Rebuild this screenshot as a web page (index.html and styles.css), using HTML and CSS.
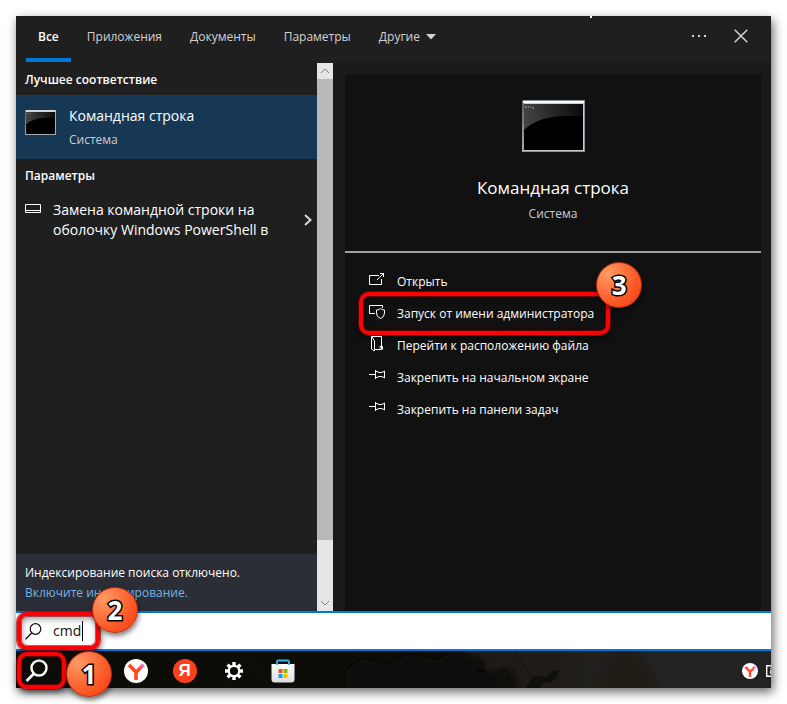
FILE: index.html
```html
<!DOCTYPE html>
<html lang="ru">
<head>
<meta charset="utf-8">
<meta name="viewport" content="width=device-width, initial-scale=1">
<title>Поиск</title>
<link rel="stylesheet" href="styles.css">
</head>
<body>
<svg class="defs" aria-hidden="true">
  <defs>
    <linearGradient id="sheen" x1="0" y1="0" x2="1" y2="0"><stop offset="0" stop-color="#444"/><stop offset="1" stop-color="#0a0a0a"/></linearGradient>
    <linearGradient id="frame" x1="0" y1="0" x2="0" y2="1"><stop offset="0" stop-color="#596067"/><stop offset="1" stop-color="#a3abb4"/></linearGradient>
    <linearGradient id="arm" x1="0" y1="1" x2="1" y2="0"><stop offset="0.4" stop-color="#fc4a22"/><stop offset="0.9" stop-color="#f56bd0"/></linearGradient>
    <linearGradient id="bag" x1="0" y1="0" x2="0" y2="1"><stop offset="0" stop-color="#fff"/><stop offset="1" stop-color="#dcdcdc"/></linearGradient>
    <linearGradient id="sand" x1="0" y1="0" x2="1" y2="0"><stop offset="0" stop-color="#1d1914"/><stop offset="0.3" stop-color="#201c18"/><stop offset="0.5" stop-color="#222"/></linearGradient>
    <filter id="soften"><feGaussianBlur stdDeviation="2"/></filter>
    <symbol id="console" viewBox="0 0 63 52">
      <rect width="63" height="52" fill="#8a939b"/>
      <rect x="1" y="1" width="61" height="50" fill="#c9cdd2"/>
      <rect width="2" height="52" fill="url(#frame)"/>
      <rect x="1" y="1" width="61" height="2" fill="#fff"/>
      <rect x="2" y="4" width="59" height="46" fill="#000"/>
      <path d="M2 4H61V16H44Q17 16 2 30Z" fill="url(#sheen)"/>
      <path d="M3 7h2M6 7h1M8 7h1M10 8h2" stroke="#aaa"/>
    </symbol>
    <symbol id="browser" viewBox="0 0 24 24">
      <circle cx="12" cy="12" r="12" fill="#fff"/>
      <path d="M5 6L12 13V21" fill="none" stroke="#fc4a22" stroke-width="3.6" stroke-linejoin="round"/>
      <path d="M12 13.5L19.5 5.5" stroke="url(#arm)" stroke-width="3.6"/>
    </symbol>
    <symbol id="pin" viewBox="0 0 17 14">
      <path d="M0 5.500H6M6.500 1V10M6.500 2.500H8L10 3.500H13L15.500 2V9L13 7.500H10L8 8.500H6.500" fill="none" stroke="#fff"/>
    </symbol>
  </defs>
</svg>

<main class="window">
  <header class="tabs">
    <nav class="tab-list">
      <button class="tab active">Все</button>
      <button class="tab">Приложения</button>
      <button class="tab">Документы</button>
      <button class="tab">Параметры</button>
      <button class="tab">Другие<svg width="10" height="6" viewBox="0 0 10 6"><path d="M0 0H10L5 5.500Z" fill="#d2d2d2"/></svg></button>
    </nav>
    <button class="tool" aria-label="Ещё"><svg width="16" height="16" viewBox="0 0 16 16"><path d="M1 7h2v2h-2zM7 7h2v2h-2zM13 7h2v2h-2z" fill="#d2d2d2"/></svg></button>
    <button class="tool" aria-label="Закрыть"><svg width="14" height="14" viewBox="0 0 14 14"><path d="M.7.7L13.300 13.300M13.300.7L.7 13.300" stroke="#d2d2d2" stroke-width="1.500"/></svg></button>
    <span class="speck"></span>
  </header>

  <div class="content">
    <section class="results">
      <h2 class="group">Лучшее соответствие</h2>
      <button class="best">
        <svg class="best-icon" width="31" height="25" viewBox="0 0 63 52" preserveAspectRatio="none"><use href="#console"/></svg>
        <span class="best-text"><span class="best-name">Командная строка</span><span class="muted">Система</span></span>
      </button>
      <h2 class="group">Параметры</h2>
      <button class="setting">
        <svg class="setting-icon" width="16" height="9" viewBox="0 0 16 9"><path d="M.5.5H15.500V8.500H.5ZM.5 6.500H15.500" fill="none" stroke="#fff"/></svg>
        <span class="setting-name">Замена командной строки на оболочку Windows PowerShell в</span>
        <svg width="8" height="12" viewBox="0 0 8 12"><path d="M1 1L6.500 6L1 11" fill="none" stroke="#d8d8d8" stroke-width="2"/></svg>
      </button>
      <div class="notice">
        <p>Индексирование поиска отключено.</p>
        <a href="#index">Включите индексирование.</a>
      </div>
    </section>

    <div class="scrollbar" aria-hidden="true">
      <svg width="16" height="16" viewBox="0 0 16 16"><path d="M4 10L8 6L12 10" fill="none" stroke="#808080"/></svg>
      <div class="thumb"></div>
      <div class="track"></div>
      <svg width="16" height="16" viewBox="0 0 16 16"><path d="M4 6L8 10L12 6" fill="none" stroke="#808080"/></svg>
    </div>

    <section class="preview">
      <div class="card">
        <div class="hero">
          <svg width="63" height="52"><use href="#console"/></svg>
          <h1>Командная строка</h1>
          <p class="muted">Система</p>
        </div>
        <div class="actions">
          <button class="action"><svg width="17" height="14" viewBox="0 0 17 14"><path d="M10 2.500H.5V11.500H12.500V6M8 7L14.500 .5M11 .5H14.500V4" fill="none" stroke="#fff"/></svg>Открыть</button>
          <button class="action marked"><svg width="17" height="16" viewBox="0 0 17 16"><path d="M6 9.500H.5V1.500H13.500V4M11.500 4.500Q13 6 15.500 6V9Q15.500 13 11.500 14.500Q7.500 13 7.500 9V6Q10 6 11.500 4.500Z" fill="none" stroke="#fff"/></svg>Запуск от имени администратора<span class="badge badge-three">3</span></button>
          <button class="action"><svg width="17" height="16" viewBox="0 0 17 16"><path d="M2.500 .5H12.500V13.500H6M2.500 .5V13L5.500 15V5L3 1M11 12.500V10.500H13.500V13.500" fill="none" stroke="#fff"/></svg>Перейти к расположению файла</button>
          <button class="action"><svg width="17" height="14"><use href="#pin"/></svg>Закрепить на начальном экране</button>
          <button class="action"><svg width="17" height="14"><use href="#pin"/></svg>Закрепить на панели задач</button>
        </div>
      </div>
    </section>
  </div>

  <div class="search">
    <label class="search-mark" for="query"><svg width="17" height="17" viewBox="0 0 17 17"><circle cx="10.500" cy="6" r="5.300" fill="none" stroke="#111" stroke-width="1.200"/><path d="M6.800 9.800L.5 16.200" stroke="#111" stroke-width="1.300"/></svg></label>
    <div class="field"><input id="query" type="text" value="cmd" aria-label="Поиск"><span class="caret"></span></div>
    <span class="outline"></span>
    <span class="badge badge-two">2</span>
  </div>

  <footer class="taskbar">
    <svg class="wallpaper" viewBox="0 0 755 37" preserveAspectRatio="none" aria-hidden="true">
      <rect width="755" height="37" fill="#0c0d08"/>
      <path d="M445 0H755V37H485Q475 20 445 0Z" fill="url(#sand)"/>
      <g filter="url(#soften)">
        <path d="M595 0H620L645 40H580Q590 15 595 0Z" fill="#211d18"/>
        <path d="M330 20L345 8L372 14L395 3L420 10L440 0L470 11L455 22L495 18L503 37H330Z" fill="#0e0f08"/>
      </g>
      <path d="M510 37L516 27L522 24L530 26L536 20L543 19L541 27L534 32L528 31L524 37ZM455 4L464 8L470 15L462 18L455 14ZM481 20L490 18L494 24L488 28L499 33V37H478Z" fill="#0f100a"/>
      <path d="M498 0L518 30" fill="none" stroke="#13140d"/>
      <path d="M10 32L45 8M20 5L48 26M90 34L125 6M210 37L230 8L250 30M340 0L356 25" fill="none" stroke="#14160f"/>
    </svg>
    <button class="task start" aria-label="Поиск"><svg width="24" height="24" viewBox="0 0 24 24"><circle cx="14" cy="9" r="7.500" fill="none" stroke="#fff" stroke-width="2.400"/><path d="M9 14.500L1.500 22" stroke="#fff" stroke-width="2.600"/></svg><span class="outline"></span><span class="badge badge-one">1</span></button>
    <div class="apps">
      <button class="task" aria-label="Браузер"><svg width="24" height="24"><use href="#browser"/></svg></button>
      <button class="task" aria-label="Яндекс"><span class="ya">Я</span></button>
      <button class="task" aria-label="Настройки"><svg width="20" height="20" viewBox="0 0 20 20"><g stroke="#fff" stroke-width="3.400"><path d="M10 1V5M10 15V19M1 10H5M15 10H19M3.600 3.600L6.500 6.500M13.500 13.500L16.400 16.400M16.400 3.600L13.500 6.500M6.500 13.500L3.600 16.400"/></g><circle cx="10" cy="10" r="5.200" fill="#0b0c08" stroke="#fff" stroke-width="2.200"/></svg></button>
      <button class="task" aria-label="Магазин"><svg width="24" height="24" viewBox="0 0 24 24"><path d="M.5 5H23.500V20.500Q23.500 23.500 20.500 23.500H3.500Q.5 23.500 .5 20.500Z" fill="url(#bag)"/><path d="M6 6V2.500Q6 1.500 7 1.500H17Q18 1.500 18 2.500V6" fill="none" stroke="#35b3e8" stroke-width="1.800"/><path d="M7.500 10h4v4h-4z" fill="#f25022"/><path d="M12.500 10h4v4h-4z" fill="#7fba00"/><path d="M7.500 15h4v4h-4z" fill="#00a4ef"/><path d="M12.500 15h4v4h-4z" fill="#ffb900"/></svg></button>
    </div>
    <div class="tray">
      <svg width="16" height="16" viewBox="0 0 24 24"><use href="#browser"/></svg>
      <svg width="5" height="12" viewBox="0 0 5 12"><path d="M5 .7H.7V11.300H5" fill="none" stroke="#fff" stroke-width="1.400"/><path d="M4 3h1v1h-1zM4 5h1v4h-1z" fill="#ddd"/></svg>
    </div>
  </footer>
</main>
</body>
</html>
```
FILE: styles.css
```css
* { box-sizing: border-box; }

body {
  margin: 0;
  padding: 16px;
  background: #fff;
  color: #fff;
  font: 13px/20px "Open Sans", "Noto Sans", sans-serif;
}

h1, h2, p { margin: 0; }

button {
  margin: 0;
  padding: 0;
  border: 0;
  background: none;
  color: inherit;
  font: inherit;
  text-align: left;
}

svg { display: block; flex: none; }

.defs { position: absolute; width: 0; height: 0; }

.window {
  display: flex;
  flex-direction: column;
  min-height: calc(100vh - 32px);
  background: #1f1f1f;
  box-shadow: 2px 4px 10px rgba(0, 0, 0, 0.6);
}

.tabs {
  position: relative;
  display: flex;
  align-items: stretch;
  height: 47px;
  padding: 0 16px 0 10px;
  font-size: 12px;
}

.speck { position: absolute; top: 0; right: 179px; width: 2px; height: 2px; background: #fff; }

.tab-list { display: flex; flex: 1; gap: 4px; }

.tab {
  display: flex;
  align-items: center;
  gap: 6px;
  padding: 0 12px;
  border-bottom: 4px solid transparent;
  color: #d2d2d2;
  margin-bottom: 1px;
}

.tab.active { border-color: #0078d7; color: #fff; font-weight: 600; }

.tool {
  display: flex;
  align-items: center;
  justify-content: center;
  width: 28px;
  margin-left: 14px;
  padding-bottom: 7px;
}

.content { display: flex; flex: 1; }

.results {
  display: flex;
  flex-direction: column;
  flex: 0 0 301px;
}

.group {
  padding: 7px 9px 5px;
  font-size: 12px;
  font-weight: 600;
  line-height: 20px;
}

.best {
  display: flex;
  gap: 13px;
  height: 64px;
  padding: 9px;
  background: #173854;
}

.best-icon { margin-top: 6px; }

.best-text { display: flex; flex-direction: column; gap: 3px; }

.best-name { font-size: 14px; line-height: 24px; }

.muted { color: #c8ccd0; font-size: 12px; line-height: 18px; }

.setting {
  display: flex;
  align-items: center;
  gap: 12px;
  padding: 9px 5px 9px 9px;
  font-size: 14px;
}

.setting-icon { align-self: flex-start; margin-top: 4px; }

.setting-name { flex: 1; }

.notice {
  margin-top: auto;
  padding: 9px;
  height: 57px;
  background: #2b2e36;
  font-size: 12px;
}

.notice a { color: #70b5ea; text-decoration: none; }

.scrollbar {
  display: flex;
  flex-direction: column;
  flex: 0 0 16px;
  background: #e6e6e6;
}

.thumb { flex: 461; background: #b9b9b9; }

.track { flex: 55; }

.preview {
  display: flex;
  flex: 1;
  padding: 12px 10px 0 12px;
  background: #191919;
}

.card { flex: 1; background: #111; }

.hero {
  display: flex;
  flex-direction: column;
  align-items: center;
  height: 178px;
  padding-top: 25px;
  border-bottom: 2px solid #a0a0a0;
}

.hero h1 {
  margin: 24px 0 5px;
  font-size: 17px;
  font-weight: 400;
  line-height: 24px;
}

.actions { padding: 13px 24px; }

.action {
  position: relative;
  display: flex;
  align-items: center;
  gap: 11px;
  height: 32px;
  font-size: 12px;
}

.action svg { margin-bottom: 4px; }

.marked::before,
.outline {
  content: "";
  position: absolute;
  border: 4px solid #fb0207;
  border-radius: 10px;
  box-shadow: 0 0 0 1px rgba(150, 0, 0, 0.6), inset 0 0 0 1px rgba(150, 0, 0, 0.6), 1px 3px 6px rgba(0, 0, 0, 0.6), inset 1px 3px 6px rgba(0, 0, 0, 0.4);
  pointer-events: none;
}

.marked::before { inset: -6px -16px -5px -10px; }

.badge {
  position: absolute;
  z-index: 2;
  width: 46px;
  height: 46px;
  border: 1px solid #b52c0c;
  border-radius: 50%;
  background: radial-gradient(circle at 25% 25%, #ff9a63, #fb5a28 60%, #f93a0c);
  box-shadow: 1px 3px 5px rgba(0, 0, 0, 0.5);
  color: #fff;
  font: 700 26px/44px "Open Sans", sans-serif;
  text-align: center;
  -webkit-text-stroke: 3px #000;
  paint-order: stroke fill;
}

.badge-three { right: -48px; top: -36px; }

.search {
  position: relative;
  display: flex;
  align-items: center;
  gap: 11px;
  height: 40px;
  padding-left: 9px;
  border: solid #0078d7;
  border-width: 2px 0;
  background: #fff;
}

.field { position: relative; display: flex; align-items: center; flex: 1; }

.field input {
  width: 100%;
  padding: 0;
  border: 0;
  outline: 0;
  background: none;
  color: #111;
  font: 14px/20px "Open Sans", sans-serif;
}

.caret { position: absolute; left: 29px; width: 1px; height: 20px; background: #000; }

.search .outline { left: 1px; top: -1px; width: 83px; height: 38px; }

.badge-two { left: 76px; top: -26px; }

.taskbar {
  position: relative;
  display: flex;
  align-items: center;
  height: 37px;
}

.wallpaper { position: absolute; inset: 0; width: 100%; height: 100%; }

.task {
  position: relative;
  display: flex;
  align-items: center;
  justify-content: center;
  width: 25px;
  height: 37px;
}

.start { width: 51px; padding: 2px 10px 0 0; }

.start .outline { inset: 1px 1px -1px; }

.badge-one { left: 50px; top: 0; }

.apps { display: flex; flex: 1; gap: 24px; margin-left: 56px; padding-top: 3px; }

.ya {
  width: 24px;
  height: 24px;
  border-radius: 50%;
  background: #fc3f1d;
  font: 700 17px/23px "Liberation Sans", sans-serif;
  text-align: center;
}

.tray { position: relative; display: flex; align-items: center; gap: 8px; padding-top: 3px; }
```
